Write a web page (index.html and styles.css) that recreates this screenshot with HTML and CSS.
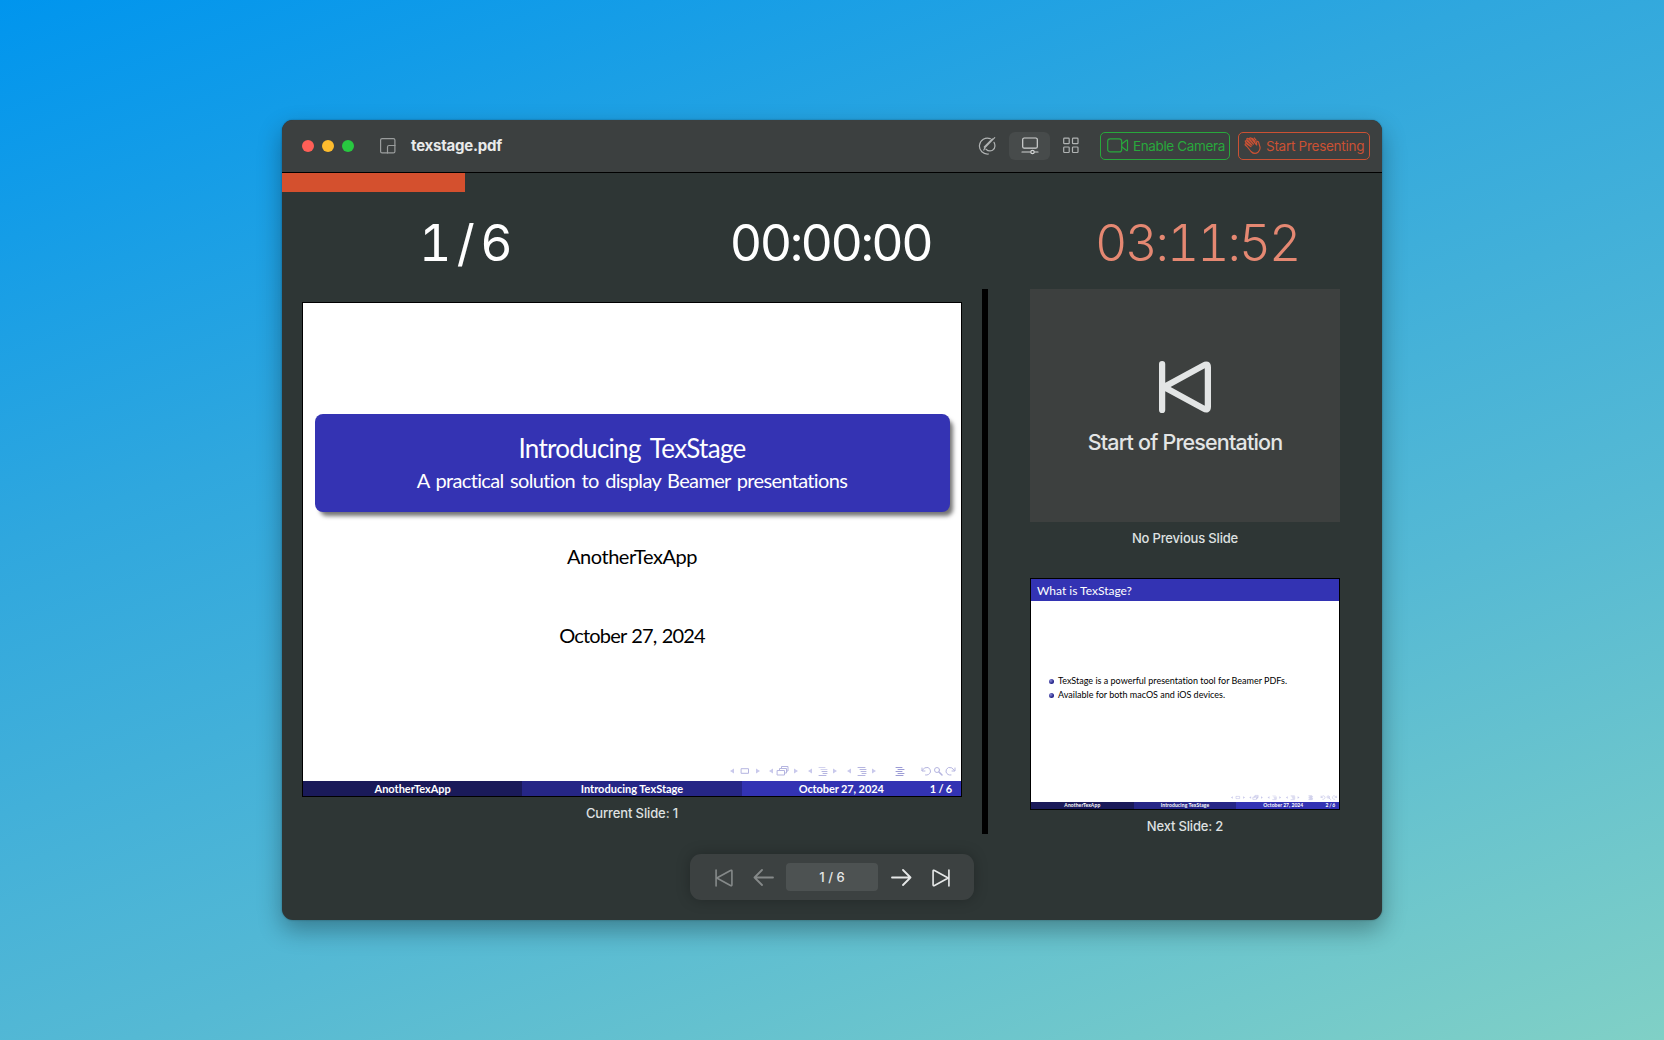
FILE: index.html
```html
<!DOCTYPE html>
<html lang="en">
<head>
<meta charset="utf-8">
<title>texstage.pdf</title>
<link rel="stylesheet" href="styles.css">
</head>
<body>
<svg class="defs" width="0" height="0">
  <symbol id="skip-back" viewBox="0 0 50 50">
    <path d="M3 3V47M43 4.200Q47 2 47 6V44Q47 48 43 45.800L7.500 26.500Q5 25 7.500 23.500Z"/>
  </symbol>
  <symbol id="skip-forward" viewBox="0 0 50 50">
    <path d="M47 3V47M7 4.200Q3 2 3 6V44Q3 48 7 45.800L42.500 26.500Q45 25 42.500 23.500Z"/>
  </symbol>
  <symbol id="beamer-nav" viewBox="0 0 230 14">
    <g fill="#c9c9ec">
      <path d="M6 4.500V9.500L2 7ZM28 4.500V9.500L32 7ZM45 4.500V9.500L41 7ZM66 4.500V9.500L70 7ZM84 4.500V9.500L80 7ZM105 4.500V9.500L109 7ZM123 4.500V9.500L119 7ZM144 4.500V9.500L148 7Z"/>
    </g>
    <g fill="none" stroke="#b5b5e0">
      <path d="M13.500 4.700H20.500V9.300H13.500Z"/>
      <path d="M49.500 6.500H56.500V11H49.500ZM51.500 6.500V4.500H58.500V9H56.500M53.500 4.500V2.500H60V7H58.500"/>
      <path stroke="#d2d2ee" d="M91 3.500H97M93 5.500H99"/><path d="M94 7.500H99M95 9.500H99M91 11.500H98"/>
      <path d="M130 3.500H137M132 5.500H138M133 7.500H138M134 9.500H138M130 11.500H137"/>
      <path stroke="#9c9cd6" d="M168 3.500H174M170 5.500H176M168 7.500H174M170 9.500H176M168 11.500H175"/>
      <path d="M194 6.500Q196.500 2.500 200 3.500Q203 5 202.500 8Q201 11.500 197.500 11M194 4V7H197"/>
      <circle cx="209" cy="6" r="2.500"/><path stroke-width="1.500" d="M211 8L214 11"/>
      <path d="M226.500 6.500Q224 2.500 220.500 3.500Q217.500 5 218 8Q219.500 11.500 223 11M227 4V7H224"/>
    </g>
  </symbol>
</svg>
<main class="window">
  <header class="titlebar">
    <div class="lights"><i class="red"></i><i class="yellow"></i><i class="green"></i></div>
    <svg class="doc-icon" width="16" height="16" viewBox="0 0 16 16"><rect x=".6" y=".6" width="14.300" height="14.300" rx="1.500"/><path d="M15 7.500H9Q7.500 7.500 7.500 9V15"/></svg>
    <h1>texstage.pdf</h1>
    <nav class="modes">
      <button class="annotate"><svg width="20" height="20" viewBox="0 0 20 20"><path d="M13.300 2.600A8 8 0 1 0 11.500 18M17 6.300Q19.500 11.500 15.500 14.300Q12 16 9 13.200M17.700 1.600L8 11.700L6.800 14M15.300 2.900L7.300 11"/></svg></button>
      <button class="active"><svg width="18" height="18" viewBox="0 0 18 18"><rect x="1.700" y="1" width="14.600" height="10.200" rx="1.500"/><path d="M1 15H9.500M13.500 15H17"/><circle cx="11.500" cy="15" r="1.700"/></svg></button>
      <button><svg width="18" height="18" viewBox="0 0 18 18"><rect x="1.700" y="1.200" width="5.500" height="5.500" rx=".8"/><rect x="10.500" y="1.200" width="5.500" height="5.500" rx=".8"/><rect x="1.700" y="10" width="5.500" height="5.500" rx=".8"/><rect x="10.500" y="10" width="5.500" height="5.500" rx=".8"/></svg></button>
    </nav>
    <button class="action camera"><svg width="22" height="16" viewBox="0 0 22 16"><rect x=".7" y=".9" width="14" height="13" rx="2.500"/><path d="M14.700 6L19.500 2.200Q20.500 1.700 20.500 2.700V12Q20.500 13 19.500 12.500L14.700 8.700"/></svg><span>Enable Camera</span></button>
    <button class="action present"><svg width="18" height="18" viewBox="0 0 18 18"><path d="M3 9.500L7 14.500Q10.500 18 14 15.300Q17 12.500 15.700 9L14.500 5Q13 3.500 12.500 5.500L12.700 8L7 1Q5.500 .8 5.500 1.800L9.500 7L4.300 1.500Q2.700 .8 2.800 2.500L8 8.200L2.500 3.500Q.9 3.500 1.500 5L7 9.700L2.200 6.500Q.8 6.700 1.300 8ZM8.500 1.500L11 4.500M10.300 1L12 3.200"/></svg><span>Start Presenting</span></button>
  </header>
  <div class="progress"><div class="bar"></div></div>
  <section class="stats">
    <div class="count">1 / 6</div>
    <div>00:00:00</div>
    <div class="clock">03:11:52</div>
  </section>
  <section class="stage">
    <div class="current">
      <article class="slide large">
        <div class="block"><h2>Introducing TexStage</h2><p>A practical solution to display Beamer presentations</p></div>
        <p class="author">AnotherTexApp</p>
        <p class="date">October 27, 2024</p>
        <svg class="nav"><use href="#beamer-nav"/></svg>
        <footer><span>AnotherTexApp</span><span>Introducing TexStage</span><span>October 27, 2024<em>1 / 6</em></span></footer>
      </article>
      <p class="caption">Current Slide: 1</p>
    </div>
    <div class="divider"></div>
    <div class="side">
      <div class="placeholder"><svg width="52" height="52"><use href="#skip-back"/></svg><p>Start of Presentation</p></div>
      <p class="caption">No Previous Slide</p>
      <article class="slide small">
        <h3>What is TexStage?</h3>
        <ul><li>TexStage is a powerful presentation tool for Beamer PDFs.</li><li>Available for both macOS and iOS devices.</li></ul>
        <svg class="nav"><use href="#beamer-nav"/></svg>
        <footer><span>AnotherTexApp</span><span>Introducing TexStage</span><span>October 27, 2024<em>2 / 6</em></span></footer>
      </article>
      <p class="caption">Next Slide: 2</p>
    </div>
  </section>
  <div class="pager">
    <svg class="dim first" width="18" height="18"><use href="#skip-back"/></svg>
    <svg class="dim prev" width="21" height="17" viewBox="0 0 21 17"><path d="M20 8.500H1.500M9 1L1.500 8.500L9 16"/></svg>
    <div class="page">1 / 6</div>
    <svg class="next" width="21" height="17" viewBox="0 0 21 17"><path d="M1 8.500H19.500M12 1L19.500 8.500L12 16"/></svg>
    <svg class="last" width="18" height="18"><use href="#skip-forward"/></svg>
  </div>
</main>
</body>
</html>
```
FILE: styles.css
```css
* { box-sizing: border-box; margin: 0; padding: 0; }
body {
  width: 1664px; height: 1040px; overflow: hidden;
  display: flex; justify-content: center; align-items: flex-start; padding-top: 120px;
  font-family: Inter, "Liberation Sans", sans-serif;
  background: linear-gradient(160deg, #0095ee 0%, #2fa7de 33%, #55b9d4 66%, #80d0c6 100%);
}
.defs { position: absolute; }
button { border: 0; background: none; font: inherit; color: inherit; }
svg { fill: none; stroke: currentColor; stroke-linecap: round; stroke-linejoin: round; }
.window {
  width: 1100px; height: 800px; border-radius: 11px; overflow: hidden;
  background: #2e3635; color: #fff;
  box-shadow: 0 0 2px rgba(0,0,0,.35), 0 10px 24px rgba(0,0,0,.32);
}
.titlebar {
  height: 53px; border-bottom: 1px solid #000; background: #3c4040;
  display: flex; align-items: center; padding: 0 12px 0 20px;
}
.lights { display: flex; gap: 8px; }
.lights i { width: 12px; height: 12px; border-radius: 50%; }
.red { background: #ff5f57; }
.yellow { background: #febc2e; }
.green { background: #28c840; }
.doc-icon { margin-left: 26px; color: #9a9d9d; stroke-width: 1.2; }
.titlebar h1 { margin: -1px 0 0 15px; font-size: 15px; font-weight: 700; letter-spacing: -.22px; color: #e9eaea; }
.modes { margin-left: auto; display: flex; color: #b0b3b3; }
.modes svg { stroke-width: 1.2; }
.modes button { width: 41px; height: 28px; display: grid; place-items: center; border-radius: 6px; }
.modes .annotate { padding-right: 4px; }
.modes .active { background: #474b4b; color: #d2d4d4; }
.action { height: 28px; display: flex; align-items: center; border: 1.5px solid; border-radius: 5px; font-size: 13.500px; white-space: nowrap; }
.action svg { stroke-width: 1.2; }
.action span { margin-top: -1px; }
.camera { width: 130px; margin-left: 9px; padding-left: 6px; gap: 4px; color: #28a83c; letter-spacing: -.37px; }
.present { width: 132px; margin-left: 8px; padding-left: 5px; gap: 4px; color: #cb5133; letter-spacing: -.27px; }
.progress { height: 19px; }
.bar { width: 183px; height: 19px; background: #d4502e; }
.stats { height: 97px; display: grid; grid-template-columns: repeat(3, 1fr); text-align: center; font-size: 50px; line-height: 103px; font-weight: 400; letter-spacing: -2.500px; font-variant-numeric: tabular-nums; }
.stats div { padding-right: 3px; }
.stats .count { letter-spacing: -4px; }
.clock { color: #e58872; font-weight: 300; letter-spacing: -2.1px; }
.stage { height: 545px; display: flex; }
.current { width: 700px; padding: 13px 20px 0; }
.divider { width: 6px; background: #000; }
.side { width: 394px; padding: 0 42px; }
.slide { background: #fff; border: 1px solid #000; color: #000; font-family: Lato, "Liberation Sans", sans-serif; font-variant-ligatures: none; display: flex; flex-direction: column; text-align: center; }
.large { height: 495px; }
.block { width: 635px; height: 98px; margin: 110.500px 0 0 11.500px; border-radius: 8px; background: #3433b3; color: #fff; box-shadow: 4px 5px 4px -1px rgba(0,0,0,.55); }
.block h2 { font-size: 26px; font-weight: 400; line-height: 32px; margin-top: 18px; letter-spacing: -.72px; word-spacing: 4px; }
.block p { font-size: 20px; line-height: 24px; margin-top: 4px; letter-spacing: -.66px; word-spacing: 2px; }
.author, .date { font-size: 20px; line-height: 24px; }
.author { margin-top: 32.500px; letter-spacing: -.46px; }
.date { margin-top: 55px; letter-spacing: -.85px; word-spacing: 1px; }
.nav { margin-top: auto; margin-left: auto; stroke: none; }
.large .nav { width: 230px; height: 14px; margin-right: 3px; }
.slide footer { display: grid; grid-template-columns: repeat(3, 1fr); color: #fff; font-weight: 700; }
.slide footer span { background: #1a1a59; }
.slide footer span:nth-child(2) { background: #262686; }
.slide footer span:nth-child(3) { background: #3333b3; display: flex; justify-content: space-between; }
.slide em { font-style: normal; letter-spacing: -.2px; }
.large footer { height: 15px; margin-top: 3px; font-size: 11px; line-height: 15px; }
.large footer span:nth-child(3) { padding: 0 9px 0 57px; letter-spacing: -.1px; }
.caption { text-align: center; font-size: 13px; line-height: 16px; font-weight: 500; letter-spacing: -.12px; color: #dfe1e1; }
.current .caption { margin-top: 8px; }
.placeholder { height: 233px; background: #3d403f; color: #e3e5e5; display: flex; flex-direction: column; align-items: center; padding-top: 72px; }
.placeholder svg { stroke-width: 6; }
.placeholder p { font-size: 21.500px; line-height: 26px; font-weight: 500; margin-top: 16px; letter-spacing: -.82px; }
.side .caption { margin-top: 8px; letter-spacing: -.18px; }
.small { height: 232px; margin-top: 32px; }
.small h3 { height: 22px; background: #3333b3; color: #fff; text-align: left; padding-left: 6px; font-size: 12px; line-height: 24px; font-weight: 400; }
.small ul { list-style: none; margin: 73px 0 0 18px; text-align: left; font-size: 9px; line-height: 14px; }
.small li { display: flex; align-items: center; gap: 4px; }
.small li::before { content: ""; width: 5px; height: 5px; border-radius: 50%; background: radial-gradient(circle at 35% 35%, #8a8ad8, #26268a 60%); }
.small .nav { width: 108px; height: 7px; margin-right: 1px; }
.small footer { height: 7px; margin-top: 1px; font-size: 5px; line-height: 7px; letter-spacing: .1px; }
.small footer span:nth-child(3) { padding: 0 4px 0 27px; letter-spacing: .03px; }
.pager { width: 284px; height: 46px; margin: 20px auto 0; border-radius: 11px; background: #3c4141; color: #e6e8e8; display: flex; align-items: center; padding: 1px 0 0 24.500px; box-shadow: 0 0 14px rgba(0,0,0,.25); }
.pager svg { stroke-width: 1.800; }
.pager svg use { stroke-width: 4.500; }
.pager .dim { color: #858989; }
.prev { margin-left: 20px; }
.next { margin-left: 12.500px; }
.last { margin-left: 20.500px; }
.page { width: 92px; height: 28px; margin: 0 0 1px 12.500px; border-radius: 4px; background: #4d5252; text-align: center; font-size: 13px; font-weight: 500; line-height: 28px; }
```
